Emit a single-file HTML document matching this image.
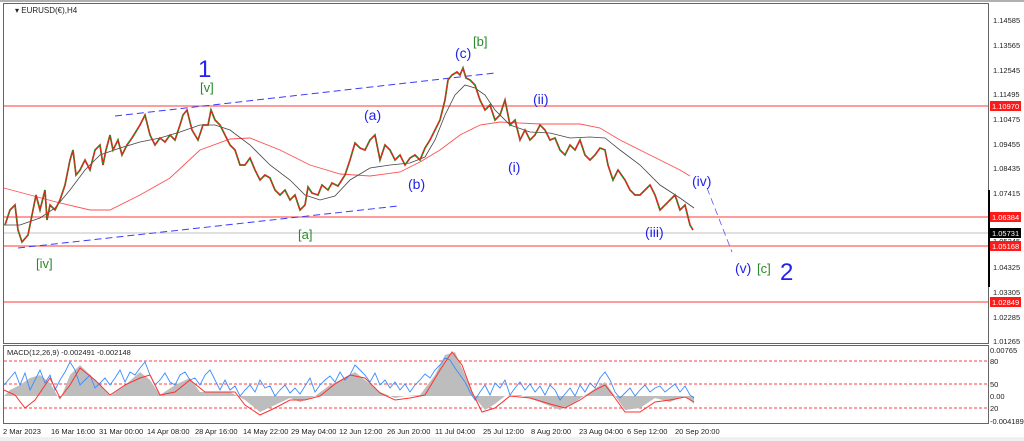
<!DOCTYPE html>
<html><head><meta charset="utf-8"><style>
html,body{margin:0;padding:0;background:#f0f0f0;}
body{width:1024px;height:441px;overflow:hidden;position:relative;font-family:"Liberation Sans",sans-serif;}
svg{position:absolute;left:0;top:0}
</style></head><body>
<svg width="1024" height="441" viewBox="0 0 1024 441" xmlns="http://www.w3.org/2000/svg" font-family="Liberation Sans, sans-serif">
<rect x="0" y="0" width="1024" height="441" fill="#fff"/>
<rect x="0" y="0" width="1024" height="2" fill="#b0b0b0"/>
<rect x="0" y="437" width="1024" height="4" fill="#f0f0f0"/>
<rect x="3.5" y="3.5" width="985" height="340" fill="#fff" stroke="#666"/>
<rect x="3.5" y="345.5" width="985" height="78" fill="#fff" stroke="#666"/>
<text x="15" y="13" font-size="8" fill="#222">▾ EURUSD(€),H4</text>
<g stroke="#ff6060" stroke-width="1.2">
<line x1="4" y1="106" x2="988" y2="106"/>
<line x1="4" y1="217" x2="988" y2="217"/>
<line x1="4" y1="246" x2="988" y2="246"/>
<line x1="4" y1="302" x2="988" y2="302"/>
</g>
<line x1="4" y1="233" x2="988" y2="233" stroke="#c0c0c0"/>
<g stroke="#3a3aff" stroke-width="1" stroke-dasharray="7,4" fill="none">
<line x1="115" y1="116" x2="495" y2="73"/>
<line x1="18" y1="248" x2="398" y2="206"/>
<line x1="707" y1="188" x2="732" y2="252" stroke="#5555ff" stroke-width="0.8"/>
</g>
<polyline fill="none" stroke="#ff5050" stroke-width="0.9" points="4,188 30,195 60,203 90,210 110,210 140,195 170,178 200,150 230,139 250,138 280,150 310,165 340,174 370,176 400,172 420,162 440,150 460,135 480,125 500,122 540,124 580,124 600,128 620,140 640,150 660,160 680,170 690,176"/>
<polyline fill="none" stroke="#444" stroke-width="0.8" points="4,225 20,225 40,218 55,208 70,190 85,170 100,155 120,148 140,142 160,138 180,132 200,125 215,125 230,130 250,145 270,165 290,180 305,195 320,200 335,196 350,180 370,168 390,165 410,163 425,157 435,140 445,115 455,95 465,85 475,88 485,95 495,110 510,125 530,132 550,133 570,138 590,137 605,138 620,150 640,165 660,185 680,198 694,208"/>
<polyline fill="none" stroke="#e02020" stroke-width="1.7" points="5,225 10,210 15,205 18,230 22,242 28,235 32,215 36,195 40,210 45,190 47,220 50,205 55,210 60,200 65,185 70,160 73,150 76,175 80,170 85,160 90,170 95,150 100,145 103,165 106,150 110,135 113,150 118,140 122,155 127,145 132,138 140,125 145,115 150,135 155,145 160,138 165,142 170,135 175,140 180,125 183,115 187,110 192,130 198,140 203,125 208,125 211,110 215,120 220,125 225,135 230,145 235,150 240,165 245,165 250,158 255,170 260,180 265,175 270,178 275,190 280,195 285,190 290,200 295,195 300,210 305,205 308,187 312,193 318,195 322,185 328,190 332,183 338,186 345,175 350,160 355,143 360,148 365,150 370,140 375,135 380,160 385,145 390,150 395,160 400,155 405,165 410,158 415,155 420,160 425,148 430,140 435,130 440,120 445,100 448,80 452,75 457,72 460,75 463,68 466,78 470,80 475,85 480,100 485,110 490,105 495,120 500,115 505,100 510,125 515,120 520,140 525,130 530,140 535,135 540,125 545,130 550,140 555,138 560,150 565,155 570,145 575,150 580,140 585,155 590,160 595,155 600,148 605,150 608,165 613,180 618,170 625,180 630,190 635,195 640,195 645,190 650,185 655,195 660,210 665,205 670,200 675,195 680,210 685,205 690,225 693,230"/>
<polyline fill="none" stroke="#1a9a1a" stroke-width="1.5" stroke-dasharray="2,3" points="5,225 10,210 15,205 18,230 22,242 28,235 32,215 36,195 40,210 45,190 47,220 50,205 55,210 60,200 65,185 70,160 73,150 76,175 80,170 85,160 90,170 95,150 100,145 103,165 106,150 110,135 113,150 118,140 122,155 127,145 132,138 140,125 145,115 150,135 155,145 160,138 165,142 170,135 175,140 180,125 183,115 187,110 192,130 198,140 203,125 208,125 211,110 215,120 220,125 225,135 230,145 235,150 240,165 245,165 250,158 255,170 260,180 265,175 270,178 275,190 280,195 285,190 290,200 295,195 300,210 305,205 308,187 312,193 318,195 322,185 328,190 332,183 338,186 345,175 350,160 355,143 360,148 365,150 370,140 375,135 380,160 385,145 390,150 395,160 400,155 405,165 410,158 415,155 420,160 425,148 430,140 435,130 440,120 445,100 448,80 452,75 457,72 460,75 463,68 466,78 470,80 475,85 480,100 485,110 490,105 495,120 500,115 505,100 510,125 515,120 520,140 525,130 530,140 535,135 540,125 545,130 550,140 555,138 560,150 565,155 570,145 575,150 580,140 585,155 590,160 595,155 600,148 605,150 608,165 613,180 618,170 625,180 630,190 635,195 640,195 645,190 650,185 655,195 660,210 665,205 670,200 675,195 680,210 685,205 690,225 693,230"/>
<g fill="#2222ee" font-size="14">
<text x="198" y="77" font-size="24">1</text>
<text x="780" y="280" font-size="24">2</text>
<text x="364" y="120">(a)</text>
<text x="408" y="189">(b)</text>
<text x="455" y="58">(c)</text>
<text x="508" y="172">(i)</text>
<text x="533" y="104">(ii)</text>
<text x="645" y="237">(iii)</text>
<text x="692" y="186">(iv)</text>
<text x="735" y="273">(v)</text>
</g>
<g fill="#2a8a2a" font-size="13">
<text x="200" y="92">[v]</text>
<text x="473" y="46">[b]</text>
<text x="298" y="239">[a]</text>
<text x="36" y="268">[iv]</text>
<text x="757" y="273">[c]</text>
</g>
<g font-size="7.5" fill="#222">
<text x="993" y="23">1.14585</text>
<text x="993" y="48">1.13565</text>
<text x="993" y="73">1.12545</text>
<text x="993" y="97">1.11495</text>
<text x="993" y="122">1.10475</text>
<text x="993" y="147">1.09455</text>
<text x="993" y="171">1.08435</text>
<text x="993" y="196">1.07415</text>
<text x="993" y="244">1.05345</text>
<text x="993" y="270">1.04325</text>
<text x="993" y="295">1.03305</text>
<text x="993" y="320">1.02285</text>
<text x="993" y="344">1.01265</text>
</g>
<rect x="988" y="190" width="2" height="97" fill="#000"/>
<rect x="990" y="101" width="31" height="10" fill="#ff1a1a"/><text x="992" y="109" font-size="7.5" fill="#fff">1.10970</text>
<rect x="990" y="212" width="31" height="10" fill="#ff1a1a"/><text x="992" y="220" font-size="7.5" fill="#fff">1.06384</text>
<rect x="990" y="228" width="31" height="10" fill="#000"/><text x="992" y="236" font-size="7.5" fill="#fff">1.05731</text>
<rect x="990" y="241" width="31" height="10" fill="#ff1a1a"/><text x="992" y="249" font-size="7.5" fill="#fff">1.05168</text>
<rect x="990" y="297" width="31" height="10" fill="#ff1a1a"/><text x="992" y="305" font-size="7.5" fill="#fff">1.02849</text>
<text x="7" y="355" font-size="7.5" fill="#222">MACD(12,26,9) -0.002491 -0.002148</text>
<g stroke="#ff4040" stroke-dasharray="3,2" stroke-width="0.9">
<line x1="4" y1="361" x2="988" y2="361"/>
<line x1="4" y1="384" x2="988" y2="384"/>
<line x1="4" y1="408" x2="988" y2="408"/>
</g>
<polygon fill="#bdbdbd" points="4,396 10,390 20,385 30,378 40,375 50,383 60,400 70,375 80,365 95,380 110,396 125,385 140,372 150,380 160,395 175,385 190,378 200,392 215,392 230,392 245,400 260,412 275,405 290,398 300,402 315,396 330,385 340,380 355,372 365,380 380,392 395,398 405,396 420,395 435,375 445,355 455,352 465,375 475,398 485,410 495,404 505,396 520,395 540,402 560,410 575,402 590,392 605,382 615,396 625,410 640,408 655,398 670,402 685,396 694,404 694,396"/>
<polyline fill="none" stroke="#3a8cff" stroke-width="0.9" points="4,385 10,378 15,372 20,385 25,373 30,390 35,380 40,370 45,383 50,375 55,390 60,380 65,372 70,362 75,370 80,385 85,380 90,375 95,388 100,383 105,378 110,385 115,378 120,370 125,382 130,372 135,375 140,368 145,362 150,375 155,385 160,380 165,373 170,382 175,385 180,375 185,372 190,380 195,378 200,385 205,375 210,370 215,380 220,390 225,380 230,390 235,386 240,396 245,390 250,385 255,392 260,380 265,388 270,386 275,396 280,390 285,385 290,393 295,388 300,394 305,386 310,378 315,392 320,385 325,380 330,376 335,382 340,372 345,380 350,375 355,365 360,370 365,375 370,382 375,373 380,385 385,380 390,388 395,382 400,390 405,384 410,392 415,385 420,380 425,374 430,378 435,370 440,365 445,358 450,360 455,368 460,375 465,382 470,392 475,400 480,392 485,385 490,395 495,383 500,388 505,380 510,395 515,388 520,382 525,390 530,384 535,392 540,386 545,395 550,385 555,390 560,400 565,394 570,388 575,396 580,385 585,392 590,383 595,388 600,378 605,372 610,380 615,392 620,398 625,393 630,388 635,396 640,390 645,385 650,392 655,388 660,386 665,392 670,388 675,384 680,392 685,386 690,395 694,398"/>
<polyline fill="none" stroke="#ff3030" stroke-width="1" points="4,390 15,395 25,408 35,400 50,378 60,398 70,385 80,368 95,380 110,395 125,385 140,378 150,375 160,395 175,392 190,380 205,392 220,392 235,392 245,405 260,415 275,408 290,400 305,400 320,396 335,384 350,375 365,378 380,393 395,400 410,398 425,395 440,370 452,352 462,365 472,392 482,412 495,408 510,396 530,398 550,404 565,408 580,400 595,390 605,385 615,398 625,412 640,412 655,402 670,400 685,397 694,402"/>
<g font-size="7.5" fill="#222">
<text x="990" y="353">0.00765</text>
<text x="990" y="364">80</text>
<text x="990" y="387">50</text>
<text x="990" y="399">0.00</text>
<text x="990" y="411">20</text>
<text x="990" y="424">-0.004189</text>
</g>
<g font-size="7.5" fill="#222">
<text x="3" y="434">2 Mar 2023</text>
<text x="51" y="434">16 Mar 16:00</text>
<text x="99" y="434">31 Mar 00:00</text>
<text x="147" y="434">14 Apr 08:00</text>
<text x="195" y="434">28 Apr 16:00</text>
<text x="243" y="434">14 May 22:00</text>
<text x="291" y="434">29 May 04:00</text>
<text x="339" y="434">12 Jun 12:00</text>
<text x="387" y="434">26 Jun 20:00</text>
<text x="435" y="434">11 Jul 04:00</text>
<text x="483" y="434">25 Jul 12:00</text>
<text x="531" y="434">8 Aug 20:00</text>
<text x="579" y="434">23 Aug 04:00</text>
<text x="627" y="434">6 Sep 12:00</text>
<text x="675" y="434">20 Sep 20:00</text>
</g>
</svg>
</body></html>
